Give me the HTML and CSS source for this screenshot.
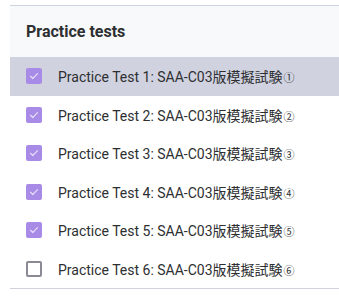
FILE: index.html
```html
<!DOCTYPE html>
<html lang="en">

<head>
  <meta charset="UTF-8" />
  <meta name="viewport" content="width=device-width, initial-scale=1.0" />
  <title>Practice tests</title>
  <link rel="stylesheet" href="styles.css">
</head>

<body>
  <div class="panel">
    <div class="panel-header">Practice tests</div>
    <ul class="test-list">
      <li class="test-item active"><span class="box checked"><svg viewBox="0 0 16 16"><path d="M4.5 8.3l2.3 2.2 4.7-4.8"/></svg></span><span>Practice Test 1: SAA-C03版模擬試験<span class="num">①</span></span></li>
      <li class="test-item"><span class="box checked"><svg viewBox="0 0 16 16"><path d="M4.5 8.3l2.3 2.2 4.7-4.8"/></svg></span><span>Practice Test 2: SAA-C03版模擬試験<span class="num">②</span></span></li>
      <li class="test-item"><span class="box checked"><svg viewBox="0 0 16 16"><path d="M4.5 8.3l2.3 2.2 4.7-4.8"/></svg></span><span>Practice Test 3: SAA-C03版模擬試験<span class="num">③</span></span></li>
      <li class="test-item"><span class="box checked"><svg viewBox="0 0 16 16"><path d="M4.5 8.3l2.3 2.2 4.7-4.8"/></svg></span><span>Practice Test 4: SAA-C03版模擬試験<span class="num">④</span></span></li>
      <li class="test-item"><span class="box checked"><svg viewBox="0 0 16 16"><path d="M4.5 8.3l2.3 2.2 4.7-4.8"/></svg></span><span>Practice Test 5: SAA-C03版模擬試験<span class="num">⑤</span></span></li>
      <li class="test-item"><span class="box"></span><span>Practice Test 6: SAA-C03版模擬試験<span class="num">⑥</span></span></li>
    </ul>
  </div>
</body>

</html>
```

FILE: styles.css
```css
body {
  margin: 0;
  background: #fff;
  font-family: Roboto, "Noto Sans CJK JP", sans-serif;
  color: #2d2f31;
}

.panel {
  margin: 5px 0 0 10px;
  border-top: 1px solid #d1d2e0;
  border-bottom: 1px solid #d1d2e0;
}

.panel-header {
  height: 51px;
  display: flex;
  align-items: center;
  padding-left: 16px;
  background: #f7f9fa;
  font-size: 16px;
  font-weight: 700;
}

.test-list {
  list-style: none;
  margin: 0;
  padding: 0;
}

.test-item {
  height: 38.5px;
  display: flex;
  align-items: center;
  gap: 16px;
  padding-left: 16px;
  font-size: 14px;
  white-space: nowrap;
}

.test-item.active {
  background: #d1d2e0;
}

.num {
  font-family: "Noto Sans CJK JP", sans-serif;
  font-size: 11px;
  margin-left: 1px;
}

.box {
  width: 16px;
  height: 16px;
  box-sizing: border-box;
  border: 2px solid #8b8a94;
  border-radius: 2px;
  flex-shrink: 0;
}

.box.checked {
  border: none;
  background: #a88be6;
}

.box svg {
  display: block;
  width: 16px;
  height: 16px;
  fill: none;
  stroke: #e6ddf8;
  stroke-width: 1.2;
  stroke-linecap: round;
  stroke-linejoin: round;
}
```
